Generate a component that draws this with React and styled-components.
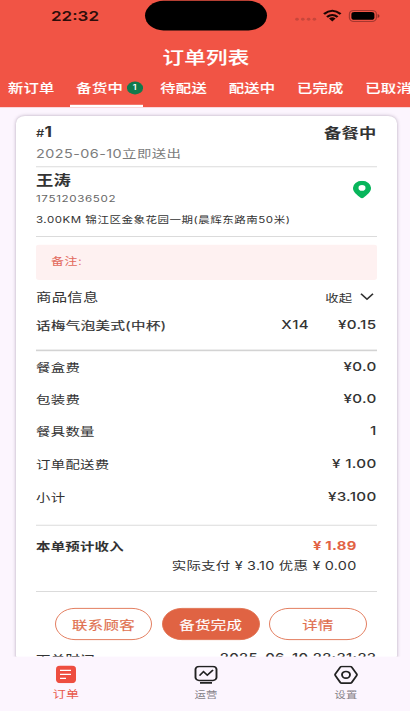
import React from "react";
import styled, { createGlobalStyle } from "styled-components";

const GlobalStyle = createGlobalStyle`
  html, body {
    margin: 0;
    height: 711px;
    overflow: hidden;
    background: #fcf5fe;
  }
  #root {
    height: 711px;
    overflow: hidden;
  }
  * {
    box-sizing: border-box;
  }
`;

// laid out at phone proportions, then flattened to the window height
const Screen = styled.div`
  width: 410px;
  height: 888.75px;
  display: flex;
  flex-direction: column;
  overflow: hidden;
  transform: scaleY(0.8);
  transform-origin: 0 0;
  background: #fcf5fe;
  color: #333;
  font-family: Inter, "Noto Sans CJK SC", sans-serif;
  letter-spacing: 0.25px;
  white-space: nowrap;
`;

const Header = styled.header`
  flex: none;
  height: 133.5px;
  background: #f15445;
  color: #fff;
  display: flex;
  flex-direction: column;
`;

const StatusBar = styled.div`
  height: 39px;
  display: grid;
  grid-template-columns: 145px 122px 1fr;
  align-items: center;
`;

const Clock = styled.div`
  padding-left: 5px;
  text-align: center;
  color: #2c0d0a;
  font-size: 17px;
  font-weight: 600;
  letter-spacing: 0;
`;

const Island = styled.div`
  height: 37px;
  border-radius: 19px;
  background: #000;
`;

const StatusIcons = styled.div`
  display: flex;
  align-items: center;
  padding-left: 27px;
  svg {
    display: block;
  }
`;

const Title = styled.h1`
  margin: 14px 0 0;
  height: 38px;
  line-height: 38px;
  padding-left: 2px;
  text-align: center;
  font-size: 21.5px;
  font-weight: 500;
  -webkit-text-stroke: 0.2px #fff;
`;

const Tabs = styled.nav`
  flex: 1;
  display: flex;
  gap: 15.7px;
  padding-left: 2px;
  overflow: hidden;
`;

const Tab = styled.div`
  flex: none;
  display: flex;
  gap: 4px;
  padding: 1px 0 3px 6px;
  line-height: 37px;
  font-size: 15.3px;
  font-weight: 500;
  -webkit-text-stroke: 0.15px #fff;
  border-bottom: 3.4px solid ${(p) => (p.$active ? "#fff" : "transparent")};
  margin-right: ${(p) => (p.$active ? "-4px" : "0")};
`;

const Badge = styled.span`
  align-self: center;
  width: 15.6px;
  height: 15.6px;
  border-radius: 50%;
  background: #117a4c;
  font-size: 9px;
  font-weight: 600;
  line-height: 15.6px;
  text-align: center;
  -webkit-text-stroke: 0;
`;

const Main = styled.main`
  flex: 1;
  min-height: 0;
  overflow: hidden;
  padding: 11px 13px 0 15.5px;
`;

const Card = styled.section`
  height: 760px;
  padding: 7px 20.5px 0;
  background: #fff;
  border-radius: 9px;
  box-shadow: 0 1px 4px rgba(60, 40, 70, 0.38);
`;

const Row = styled.div`
  display: flex;
  align-items: center;
  justify-content: space-between;
  height: ${(p) => p.$h || 24}px;
  margin-top: ${(p) => p.$top || 0}px;
  font-size: ${(p) => p.$size || 14.4}px;
  font-weight: ${(p) => p.$weight || 400};
  color: ${(p) => p.$color || "#333"};
  letter-spacing: ${(p) => p.$spacing || 0.25}px;
`;

const Divider = styled.hr`
  height: 1.25px;
  margin: ${(p) => p.$top}px 0 0;
  border: 0;
  background: #d3d3d3;
`;

const Hash = styled.small`
  font-size: 13px;
  font-weight: 500;
`;

const Pin = styled.svg`
  display: block;
  margin: 27px 6px 0 0;
`;

const Remark = styled.div`
  height: 43.75px;
  margin-top: 10px;
  padding: 0 15px;
  line-height: 40px;
  border-radius: 3px;
  background: #fef1f1;
  color: #e2695d;
  font-size: 13px;
  letter-spacing: 0.5px;
`;

const Toggle = styled.span`
  display: flex;
  align-items: center;
  gap: 7px;
  padding-right: 3px;
  font-size: 13.4px;
`;

const Product = styled.span`
  -webkit-text-stroke: 0.25px currentColor;
  letter-spacing: 0.5px;
`;

const Quantity = styled.span`
  margin-left: auto;
  margin-right: 29px;
  font-size: 15px;
  font-weight: 500;
`;

const Amount = styled.span`
  font-size: 15.2px;
  font-weight: 500;
`;

const CreatedAt = styled.span`
  font-size: 14.8px;
  font-weight: 500;
`;

const Income = styled.span`
  margin-right: 20px;
  color: #e26243;
  font-size: 14.8px;
`;

const Paid = styled.span`
  margin-left: auto;
  margin-right: 20px;
`;

const Actions = styled.div`
  display: flex;
  justify-content: center;
  gap: 9.6px;
  margin-top: 20px;
  padding-left: 9px;
`;

const Button = styled.button`
  flex: none;
  width: 97.7px;
  height: 40px;
  padding: 0;
  border: 1.3px solid #e0704f;
  border-radius: 20px;
  background: ${(p) => (p.$filled ? "#e06343" : "#fff")};
  color: ${(p) => (p.$filled ? "#fff" : "#e0704f")};
  font-family: inherit;
  font-size: 15.4px;
  letter-spacing: 0.3px;
  -webkit-text-stroke: 0.2px currentColor;
`;

const BottomNav = styled.nav`
  flex: none;
  height: 67.5px;
  display: flex;
  justify-content: space-between;
  padding: 11px 44px 0 46px;
  background: #fcf5fe;
`;

const NavItem = styled.div`
  width: 40px;
  display: flex;
  flex-direction: column;
  align-items: center;
  color: ${(p) => (p.$active ? "#e8584b" : "#858187")};
  font-size: ${(p) => (p.$active ? 13 : 11.3)}px;
  line-height: 29px;
  svg {
    display: block;
    flex: none;
  }
`;

const fees = [
  { label: "餐盒费", value: "¥0.0", h: 39.5 },
  { label: "包装费", value: "¥0.0", h: 40 },
  { label: "餐具数量", value: "1", h: 40 },
  { label: "订单配送费", value: "¥ 1.00", h: 42 },
  { label: "小计", value: "¥3.100", h: 41 },
];

const tabs = ["新订单", "备货中", "待配送", "配送中", "已完成", "已取消"];

const App = () => {
  return (
    <>
      <GlobalStyle />
      <Screen>
        <Header>
          <StatusBar>
            <Clock>22:32</Clock>
            <Island />
            <StatusIcons>
              <svg width="88" height="20" viewBox="0 0 88 20">
                <g fill="#c8463b">
                  <circle cx="3" cy="14" r="1.8" />
                  <circle cx="8.8" cy="14" r="1.8" />
                  <circle cx="14.6" cy="14" r="1.8" />
                  <circle cx="20.4" cy="14" r="1.8" />
                </g>
                <g fill="none" stroke="#1c0504" strokeWidth="2.5">
                  <path d="M30 7.400q8.300-8 16.600 0" />
                  <path d="M33 11.200q5.300-5 10.600 0" />
                </g>
                <path d="M35 13.200q3.300-3 6.600 0L38.300 17z" fill="#1c0504" />
                <rect x="55.400" y="3" width="27" height="13.800" rx="4.500" fill="none" stroke="#a5372f" strokeWidth="1.200" />
                <rect x="57.400" y="5" width="23" height="9.800" rx="3" fill="#000" />
                <path d="M83.600 7.600v4.800q1.900-.6 1.900-2.400t-1.900-2.400z" fill="#8e2d26" />
              </svg>
            </StatusIcons>
          </StatusBar>
          <Title>订单列表</Title>
          <Tabs>
            {tabs.map((name) => (
              <Tab key={name} $active={name === "备货中"}>
                {name}
                {name === "备货中" && <Badge>1</Badge>}
              </Tab>
            ))}
          </Tabs>
        </Header>

        <Main>
          <Card>
            <Row $h={26} $size={17.3} $weight={700}>
              <span>
                <Hash>#</Hash>1
              </span>
              <span>备餐中</span>
            </Row>
            <Row $h={25} $color="#7c7c7c" $spacing={0.45}>
              2025-06-10立即送出
            </Row>
            <Divider $top={5} />
            <Row $h={26} $top={2} $size={17.3} $weight={700}>
              王涛
              <Pin width="18" height="22" viewBox="0 0 18 22">
                <path
                  fillRule="evenodd"
                  fill="#07b55b"
                  d="M9 0a9 9 0 0 0-9 9.200c0 5 4.300 8.500 7.600 11.900q1.400 1.300 2.800 0C13.700 17.700 18 14.200 18 9.200A9 9 0 0 0 9 0zm0 5.400a3.500 3.500 0 1 1 0 7 3.500 3.500 0 0 1 0-7z"
                />
              </Pin>
            </Row>
            <Row $h={25} $size={11.6} $color="#666" $spacing={0.65}>
              17512036502
            </Row>
            <Row $size={11.5} $spacing={0.52}>
              3.00KM 锦江区金象花园一期(晨辉东路南50米)
            </Row>
            <Divider $top={9} />
            <Remark>备注:</Remark>
            <Row $h={36} $top={3} $size={15.4}>
              商品信息
              <Toggle>
                收起
                <svg width="14" height="10" viewBox="0 0 14 10">
                  <path d="M1 1.200 7 8l6-6.800" fill="none" stroke="#333" strokeWidth="1.700" />
                </svg>
              </Toggle>
            </Row>
            <Row $h={33} $spacing={0.35}>
              <Product>话梅气泡美式(中杯)</Product>
              <Quantity>X14</Quantity>
              <Amount>¥0.15</Amount>
            </Row>
            <Divider $top={15.5} />
            {fees.map((fee) => (
              <Row key={fee.label} $h={fee.h} $spacing={0.3}>
                {fee.label}
                <Amount>{fee.value}</Amount>
              </Row>
            ))}
            <Divider $top={14.5} />
            <Row $top={14} $weight={700}>
              本单预计收入
              <Income>¥ 1.89</Income>
            </Row>
            <Row $size={14.4}>
              <Paid>实际支付 ¥ 3.10 优惠 ¥ 0.00</Paid>
            </Row>
            <Divider $top={20} />
            <Actions>
              <Button>联系顾客</Button>
              <Button $filled>备货完成</Button>
              <Button>详情</Button>
            </Actions>
            <Row $top={11} $weight={500} $spacing={0.35}>
              下单时间
              <CreatedAt>2025-06-10 22:31:23</CreatedAt>
            </Row>
          </Card>
        </Main>

        <BottomNav>
          <NavItem $active>
            <svg width="20" height="22" viewBox="0 0 20 22">
              <rect width="20" height="22" rx="4.500" fill="#ee4d40" />
              <path d="M4 6h11M4 11h11M4 16h6" stroke="#fff" strokeWidth="1.700" />
            </svg>
            订单
          </NavItem>
          <NavItem>
            <svg width="24" height="23" viewBox="0 0 24 23" fill="none" stroke="#222" strokeWidth="1.900">
              <rect x="1.500" y="1" width="21" height="17.500" rx="3.500" />
              <path d="m5.500 12.500 4-5 3.800 4.500 5.700-6.500" />
              <path d="M6 21.600h12" strokeWidth="2.400" />
            </svg>
            运营
          </NavItem>
          <NavItem>
            <svg width="24" height="23" viewBox="0 0 24 22" preserveAspectRatio="none" fill="none" stroke="#222" strokeWidth="1.900">
              <path d="M7.800 1h8.400q1 0 1.500.8l4.900 8.200q.6 1 0 2l-4.900 8.200q-.5.8-1.500.8H7.800q-1 0-1.500-.8L1.400 12q-.6-1 0-2l4.900-8.200Q6.800 1 7.800 1z" />
              <circle cx="12" cy="11" r="4" />
            </svg>
            设置
          </NavItem>
        </BottomNav>
      </Screen>
    </>
  );
};

export default App;
